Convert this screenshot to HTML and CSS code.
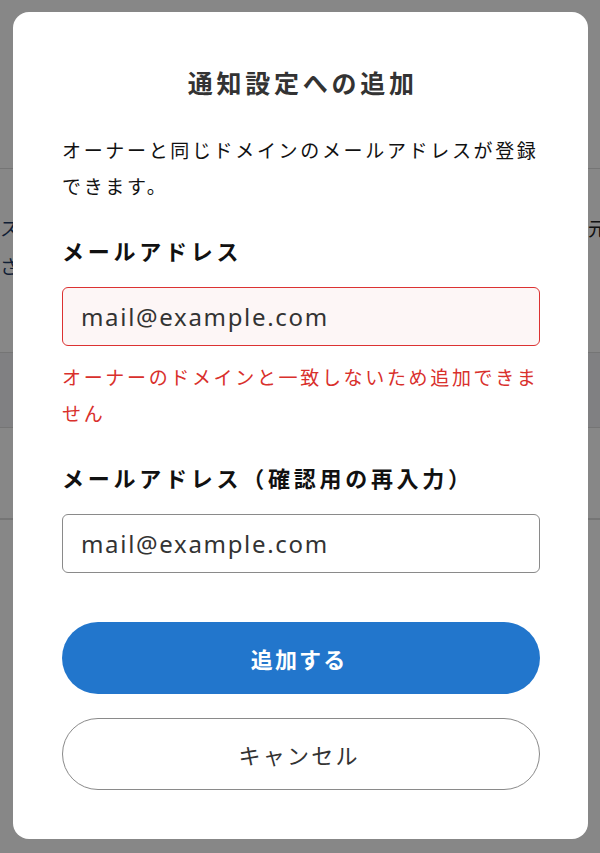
FILE: index.html
```html
<!DOCTYPE html>
<html lang="ja">
<head>
    <meta charset="UTF-8">
    <meta name="viewport" content="width=device-width, initial-scale=1.0">
    <title>通知設定への追加</title>
    <link rel="stylesheet" href="styles.css">
</head>
<body>
    <div class="page">
        <div class="page-header"></div>
        <div class="page-row row-tall">
            <div class="cell cell-left">スー<br>さと</div>
            <div class="cell cell-right">元</div>
        </div>
        <div class="page-row row-shaded"></div>
        <div class="page-row row-short"></div>
        <div class="page-row"></div>
    </div>

    <div class="overlay">
        <div class="modal">
            <h1 class="modal-title">通知設定への追加</h1>
            <p class="modal-text">オーナーと同じドメインのメールアドレスが登録できます。</p>

            <label class="field-label" for="email">メールアドレス</label>
            <input class="field-input is-error" type="email" id="email" value="mail@example.com">
            <p class="field-error">オーナーのドメインと一致しないため追加できません</p>

            <label class="field-label label-second" for="email-confirm">メールアドレス（確認用の再入力）</label>
            <input class="field-input" type="email" id="email-confirm" value="mail@example.com">

            <div class="actions">
                <button class="btn btn-primary">追加する</button>
                <button class="btn btn-secondary">キャンセル</button>
            </div>
        </div>
    </div>
</body>
</html>
```

FILE: styles.css
```css
/* Base */
body {
    margin: 0;
    padding: 0;
    font-family: "Noto Sans CJK JP", "Noto Sans", sans-serif;
    color: #222;
    background: #fff;
    overflow: hidden;
}

/* Page behind the dialog */
.page {
    min-height: 100vh;
}

.page-header {
    height: 168px;
    border-bottom: 1px solid #ddd;
}

.page-row {
    border-bottom: 1px solid #ddd;
    display: flex;
    justify-content: space-between;
}

.row-tall {
    height: 183px;
}

.row-shaded {
    height: 74px;
    background: #f1f2f6;
}

.row-short {
    height: 90px;
}

.cell {
    width: 13px;
    overflow: hidden;
    font-size: 19px;
    line-height: 38px;
    color: #1d3b66;
    padding-top: 40px;
    white-space: nowrap;
}

.cell-right {
    width: 12px;
    color: #222;
}

/* Overlay */
.overlay {
    position: fixed;
    inset: 0;
    background: rgba(0, 0, 0, 0.47);
    display: flex;
    align-items: flex-start;
    justify-content: center;
    padding-top: 12px;
}

.modal {
    width: 575px;
    box-sizing: border-box;
    margin-left: 1px;
    background: #fff;
    border-radius: 16px;
    padding: 52px 48px 49px 49px;
    display: flex;
    flex-direction: column;
}

.modal-title {
    margin: 0;
    font-size: 25px;
    line-height: 36px;
    font-weight: 700;
    color: #333;
    text-align: center;
    letter-spacing: 0.15em;
    padding-left: 0.15em;
}

.modal-text {
    margin: 32px 0 0;
    font-size: 19px;
    line-height: 36px;
    letter-spacing: 0.14em;
    color: #111;
}

/* Form fields */
.field-label {
    margin-top: 28px;
    font-size: 22px;
    line-height: 36px;
    font-weight: 700;
    letter-spacing: 0.17em;
    color: #111;
}

.label-second {
    margin-top: 28px;
}

.field-input {
    margin-top: 19px;
    height: 59px;
    box-sizing: border-box;
    width: 100%;
    padding: 0 18px;
    border: 1px solid #8a8a8a;
    border-radius: 6px;
    background: #fff;
    font-family: "Noto Sans", sans-serif;
    font-size: 24px;
    letter-spacing: 0.07em;
    color: #333;
    outline: none;
}

.field-input.is-error {
    border-color: #dc3232;
    background: #fdf6f6;
}

.field-error {
    margin: 13px 0 0;
    font-size: 19px;
    line-height: 36px;
    letter-spacing: 0.14em;
    color: #d9302c;
}

/* Buttons */
.actions {
    margin-top: 49px;
    display: flex;
    flex-direction: column;
    gap: 24px;
}

.btn {
    height: 72px;
    border-radius: 36px;
    font-family: "Noto Sans CJK JP", "Noto Sans", sans-serif;
    font-size: 22px;
    letter-spacing: 0.1em;
    padding-left: 0.1em;
    cursor: pointer;
}

.btn-primary {
    background: #2276cc;
    border: none;
    color: #fff;
    font-weight: 700;
}

.btn-secondary {
    background: #fff;
    border: 1px solid #8a8a8a;
    color: #333;
}
```
